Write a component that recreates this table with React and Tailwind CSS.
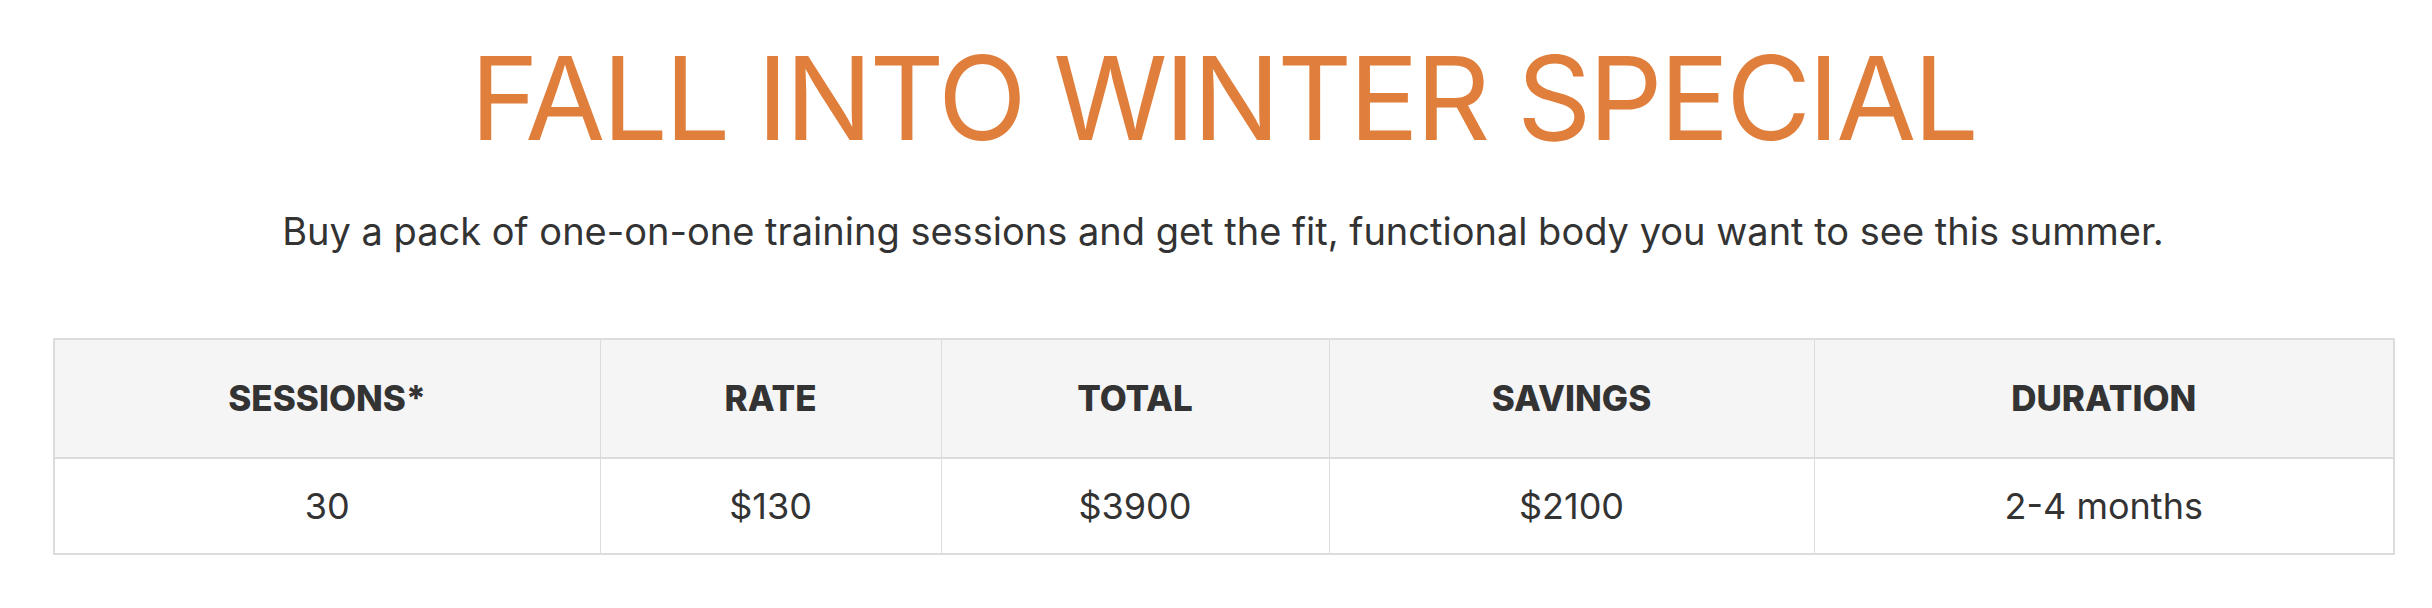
import React from 'react';

const cols = [
    { label: 'SESSIONS*', value: '30', w: 'w-[546px]' },
    { label: 'RATE', value: '$130', w: 'w-[341px]' },
    { label: 'TOTAL', value: '$3900', w: 'w-[388px]' },
    { label: 'SAVINGS', value: '$2100', w: 'w-[485px]' },
    { label: 'DURATION', value: '2-4 months', w: 'w-[580px]' },
];

const App = () => {
    return (
        <div className="bg-white min-h-[608px] pl-[53px] pr-[39px] font-['Inter',sans-serif] text-[#333]">
            <h1 className="mt-[26px] text-center text-[116px] leading-[144px] tracking-[-3px] font-normal text-[#e07e3c]">
                FALL INTO WINTER SPECIAL
            </h1>
            <p className="mt-[34px] text-center text-[38px] leading-[54px]">
                Buy a pack of one-on-one training sessions and get the fit, functional body you want to see this summer.
            </p>
            <table className="mt-[80px] w-full table-fixed border-collapse border-2 border-[#dcdcdc]">
                <colgroup>
                    {cols.map((c) => (
                        <col key={c.label} className={c.w} />
                    ))}
                </colgroup>
                <thead>
                    <tr className="bg-[#f5f5f5] h-[119px] border-b-2 border-[#dcdcdc]">
                        {cols.map((c) => (
                            <th key={c.label} className="border-x border-[#dcdcdc] text-[35px] font-extrabold text-center">
                                {c.label}
                            </th>
                        ))}
                    </tr>
                </thead>
                <tbody>
                    <tr className="h-[96px]">
                        {cols.map((c) => (
                            <td key={c.label} className="border-x border-[#dcdcdc] text-[36px] text-center">
                                {c.value}
                            </td>
                        ))}
                    </tr>
                </tbody>
            </table>
        </div>
    );
};

export default App;
